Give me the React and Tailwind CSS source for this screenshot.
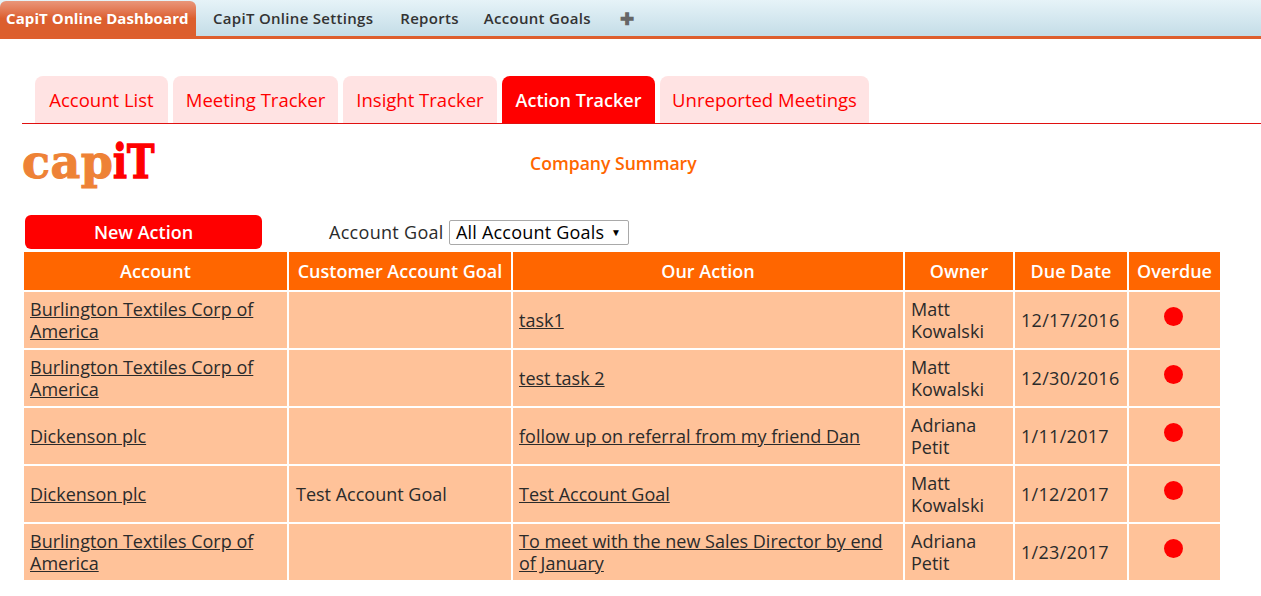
const navItems = [
  { label: 'CapiT Online Settings', mr: 'mr-[27px]' },
  { label: 'Reports', mr: 'mr-[25px]' },
  { label: 'Account Goals', mr: 'mr-[29px]' },
];
const tabs = [
  { label: 'Account List', w: 'w-[133px]' },
  { label: 'Meeting Tracker', w: 'w-[165px]' },
  { label: 'Insight Tracker', w: 'w-[154px]' },
  { label: 'Action Tracker', w: 'w-[153px]', active: true },
  { label: 'Unreported Meetings', w: 'w-[209px]' },
];

const BURLINGTON = 'Burlington Textiles Corp of America';
const rows = [
  { account: BURLINGTON, goal: '', action: 'task1', owner: 'Matt Kowalski', due: '12/17/2016' },
  { account: BURLINGTON, goal: '', action: 'test task 2', owner: 'Matt Kowalski', due: '12/30/2016' },
  { account: 'Dickenson plc', goal: '', action: 'follow up on referral from my friend Dan', owner: 'Adriana Petit', due: '1/11/2017' },
  { account: 'Dickenson plc', goal: 'Test Account Goal', action: 'Test Account Goal', owner: 'Matt Kowalski', due: '1/12/2017' },
  { account: BURLINGTON, goal: '', action: 'To meet with the new Sales Director by end of January', owner: 'Adriana Petit', due: '1/23/2017' },
];

const headers = [
  { label: 'Account', w: 'w-[263px]' },
  { label: 'Customer Account Goal', w: 'w-[222px]' },
  { label: 'Our Action', w: 'w-[390px]' },
  { label: 'Owner', w: 'w-[108px]' },
  { label: 'Due Date', w: 'w-[112px]' },
  { label: 'Overdue', w: 'w-[91px]' },
];

const App = () => {
  return (
    <div className="h-[596px] overflow-hidden bg-white font-['Open_Sans',sans-serif] text-[#2b2b2b]">
      <div className="flex h-[39px] items-end border-b-[3px] border-[#de5f2e] bg-gradient-to-b from-[#e6f3f8] to-[#c4dde7]">
        <div className="flex h-[35px] w-[196px] items-center rounded-t-[6px] bg-gradient-to-b from-[#e9967a] via-[#dc5f2e] to-[#dc5f2e] pl-[6px] text-[15px] font-bold tracking-[0.1px] whitespace-nowrap text-white">
          CapiT Online Dashboard
        </div>
        <div className="flex h-[36px] items-center pl-[17px] text-[15px] font-semibold tracking-[0.3px] text-[#333]">
          {navItems.map((item) => (
            <span key={item.label} className={item.mr}>{item.label}</span>
          ))}
          <span className="text-[17px] font-bold leading-none text-[#666]">✚</span>
        </div>
      </div>

      <div className="ml-[22px] mt-[37px] flex h-[48px] items-end gap-[5px] border-b border-[#e01010] pl-[13px]">
        {tabs.map((tab) => (
          <div
            key={tab.label}
            className={`flex h-[47px] items-center justify-center rounded-t-[8px] ${tab.w} ${
              tab.active ? 'bg-[#ff0000] pt-[2px] text-[18px] font-semibold text-white' : 'bg-[#ffe3e3] pt-[1px] text-[18.5px] font-medium text-[#ff0000]'
            }`}
          >
            {tab.label}
          </div>
        ))}
      </div>

      <div className="relative h-[91px]">
        <div className="absolute left-[22px] top-[10px] font-['DejaVu_Serif',serif] text-[46px] font-bold leading-[56px] whitespace-nowrap">
          <span className="tracking-[0.5px] text-[#ee8236] [-webkit-text-stroke:1px_#ee8236]">cap</span>
          <span className="inline-block origin-left scale-x-[0.8] text-[#ff0000] [-webkit-text-stroke:1.5px_#ff0000]">iT</span>
        </div>
        <div className="absolute left-[530px] top-[26px] text-[17.6px] font-semibold text-[#ff6600]">Company Summary</div>
      </div>

      <div className="ml-[25px] flex h-[34px] items-start">
        <button className="h-[34px] w-[237px] rounded-[6px] bg-[#ff0000] text-[18px] font-semibold text-white">New Action</button>
        <div className="ml-[67px] flex h-[34px] items-center text-[18px] tracking-[0.3px]">
          <span className="w-[120px] whitespace-nowrap">Account Goal</span>
          <div className="flex h-[25px] w-[180px] items-center justify-between rounded-[2px] border border-[#a9a9a9] pl-[6px] pr-[7px] tracking-[0.2px] text-black">
            <span>All Account Goals</span>
            <span className="text-[10px]">▼</span>
          </div>
        </div>
      </div>

      <table className="ml-[22px] mt-px w-[1200px] table-fixed border-separate border-spacing-[2px] text-[18px]">
        <thead>
          <tr>
            {headers.map((h) => (
              <th key={h.label} className={`h-[38px] bg-[#ff6600] p-0 text-center font-semibold text-white ${h.w}`}>{h.label}</th>
            ))}
          </tr>
        </thead>
        <tbody>
          {rows.map((row, i) => (
            <tr key={i} className="h-[56px]">
              <td className="bg-[#ffc299] px-[6px] py-0 leading-[22px]"><a href="#" className="underline">{row.account}</a></td>
              <td className="bg-[#ffc299] px-[7px] py-0 leading-[22px]">{row.goal}</td>
              <td className="bg-[#ffc299] px-[6px] py-0 leading-[22px]"><a href="#" className="underline">{row.action}</a></td>
              <td className="bg-[#ffc299] px-[6px] py-0 leading-[22px]">{row.owner}</td>
              <td className="bg-[#ffc299] px-[6px] py-0 leading-[22px] tracking-[0.3px]">{row.due}</td>
              <td className="bg-[#ffc299] p-0">
                <div className="mb-[8px] ml-[35px] h-[19px] w-[19px] rounded-full bg-[#ff0000]" />
              </td>
            </tr>
          ))}
        </tbody>
      </table>
    </div>
  );
};

export default App;
